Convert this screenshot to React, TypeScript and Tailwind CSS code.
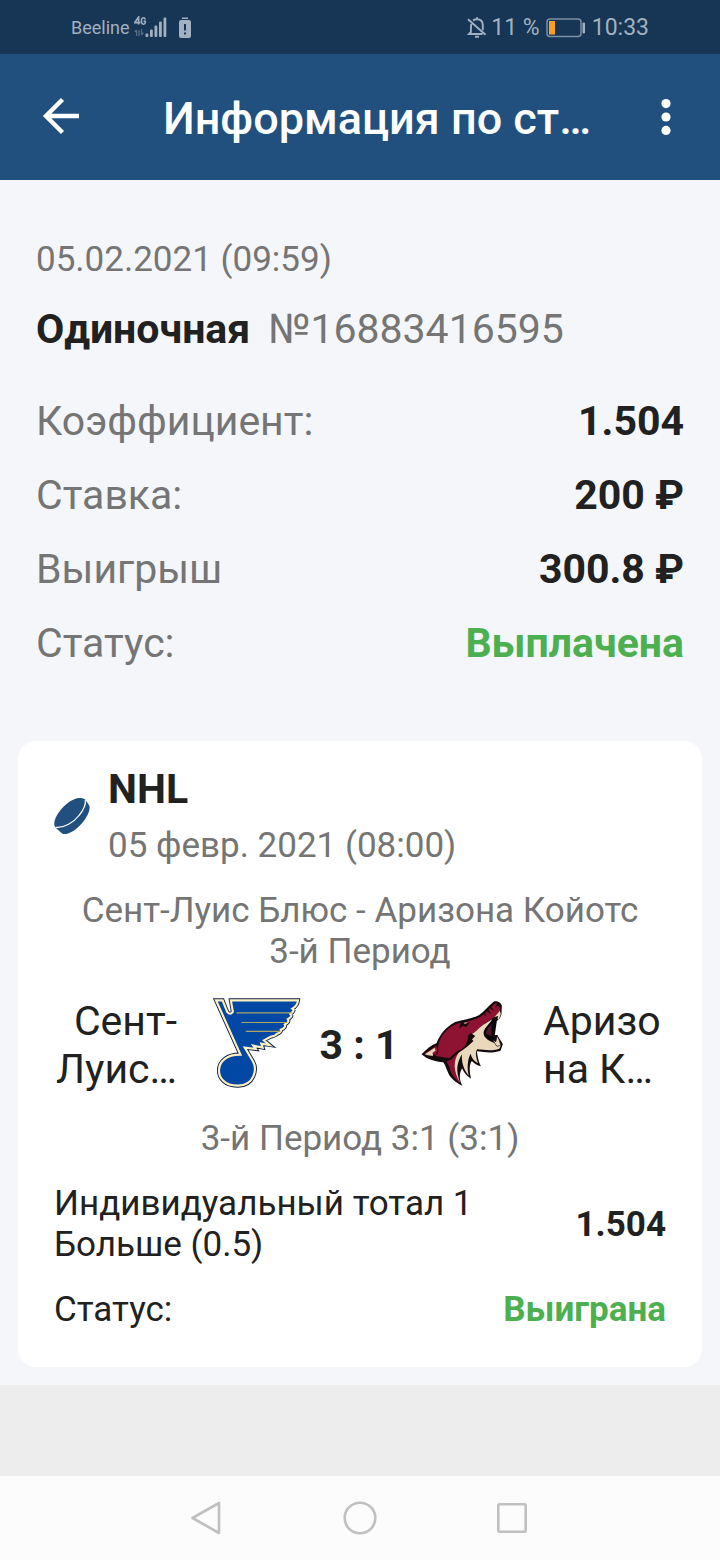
import React from "react";

function StatusBar() {
  return (
    <div className="flex h-[54px] items-center justify-between bg-[#173554] px-[71px] pt-0.5 text-[#a3b0bf]">
      <div className="flex items-center">
        <span className="text-[18px] leading-6">Beeline</span>
        <svg className="ml-1 h-6 w-[34px]" viewBox="0 0 34 24" fill="currentColor" aria-hidden="true">
          <path d="M4.600 8.500V1L.8 6.600h5.500M11.200 3.600C10.800 1.200 7.800 1.200 7.500 3.600v2.800c.3 2.400 3.500 2.400 3.800.1V5.300H9.600" fill="none" stroke="currentColor" strokeWidth="1.600" />
          <path d="M2.600 14v6M.8 16l1.800-2M5 14v6M7.500 13v6M7.500 19l2-2.400" fill="none" stroke="currentColor" strokeOpacity=".45" strokeWidth="1.300" />
          <rect x="11.500" y="17.500" width="2.800" height="3.500" rx="1" />
          <rect x="16" y="13.500" width="2.800" height="7.500" rx="1" />
          <rect x="20.500" y="9.500" width="2.800" height="11.500" rx="1" />
          <rect x="25" y="5.500" width="2.800" height="15.500" rx="1" />
          <rect x="29.500" y="1.500" width="2.800" height="19.500" rx="1" />
        </svg>
        <svg className="ml-2.5 h-6 w-[14px]" viewBox="0 0 14 24" aria-hidden="true">
          <path d="M4 1.500h6v1.600H4zM3 4h8a2 2 0 0 1 2 2v14a2 2 0 0 1-2 2H3a2 2 0 0 1-2-2V6a2 2 0 0 1 2-2z" fill="currentColor" />
          <path d="M7 8v6.500M7 16.500v2" stroke="#173554" strokeWidth="2" />
        </svg>
      </div>
      <div className="flex items-center text-[23px] leading-7">
        <svg className="h-6 w-5" viewBox="0 0 20 24" fill="none" stroke="currentColor" strokeWidth="1.900" aria-hidden="true">
          <path d="M6 4.500C7.200 3.600 8.500 3.300 10 3.300c3.800 0 5.800 2.500 5.800 6v5M4.300 8c-.4 1.500-.4 3-.4 8L2 18h13.500M1 3.300l17.500 15.500M8 20.800h4M10 3.300V1.200" />
        </svg>
        <span className="ml-1">11 %</span>
        <svg className="ml-1.5 h-5 w-10" viewBox="0 0 40 20" aria-hidden="true">
          <rect x="1" y="1" width="34" height="17.500" rx="3" fill="none" stroke="#7d8fa3" strokeWidth="1.500" />
          <rect x="3" y="3" width="6" height="13.500" fill="#ff9d1e" />
          <rect x="36.500" y="4.500" width="2.500" height="11" rx="1" fill="currentColor" />
        </svg>
        <span className="ml-1.5">10:33</span>
      </div>
    </div>
  );
}

function Toolbar() {
  return (
    <header className="flex h-[126px] items-center bg-[#21507f] pr-12 pl-[42px] text-white">
      <button type="button" aria-label="Назад" className="shrink-0">
        <svg className="h-10 w-[38px]" viewBox="0 0 38 40" fill="none" stroke="currentColor" strokeWidth="4.400" aria-hidden="true">
          <path d="M37 19H4M20.500 2.500L4 19L20.500 35.500" />
        </svg>
      </button>
      <h1 className="ml-[14px] min-w-0 flex-1 truncate pt-1 text-center text-[45px] leading-[56px] font-medium">
        Информация по ст…
      </h1>
      <button type="button" aria-label="Меню" className="flex w-3 shrink-0 justify-center">
        <svg className="h-9 w-[10px]" viewBox="0 0 10 36" fill="currentColor" aria-hidden="true">
          <circle cx="5" cy="4.600" r="4.600" />
          <circle cx="5" cy="18" r="4.600" />
          <circle cx="5" cy="31.400" r="4.600" />
        </svg>
      </button>
    </header>
  );
}

const summary = [
  { label: "Коэффициент:", value: "1.504", won: false },
  { label: "Ставка:", value: "200 ₽", won: false },
  { label: "Выигрыш", value: "300.8 ₽", won: false },
  { label: "Статус:", value: "Выплачена", won: true },
];

function Summary() {
  return (
    <section className="px-9 pt-[59px]">
      <p className="text-[35px] leading-[42px] text-[#757575]">05.02.2021 (09:59)</p>
      <h2 className="mt-6 flex gap-[18px] text-[41px] leading-[48px] text-[#757575]">
        <span className="font-bold text-[#212121]">Одиночная</span>
        <span className="font-normal">№16883416595</span>
      </h2>
      <dl className="mt-11 flex flex-col gap-[26px] text-[41px] leading-[48px]">
        {summary.map((row) => (
          <div key={row.label} className="flex justify-between">
            <dt className="text-[#757575]">{row.label}</dt>
            <dd className={row.won ? "font-bold text-[#4caf50]" : "font-bold text-[#212121]"}>{row.value}</dd>
          </div>
        ))}
      </dl>
    </section>
  );
}

function Puck() {
  return (
    <svg className="h-[38px] w-9 shrink-0" viewBox="0 0 36 38" aria-hidden="true">
      <path d="M.3 26C1 17 14 2 25 1c3.500-.3 6 .5 7 2.500l3.500 5.500C37 17 25 33 14 36.500c-3 1-5.500.5-6.500-.5L2 31C.5 29.500 0 28 .3 26z" fill="#21507f" />
      <path d="M1.500 30.300C10 31.500 20 25 25 18.500c4.500-5.500 7-11 6.300-15.500" fill="none" stroke="#fff" strokeWidth="1.200" />
    </svg>
  );
}

const bluesShape =
  "M7 5H27L41 40Q50 51 58 40L52 5H255Q253 22 238 30Q247 36 232 46Q240 54 224 62Q230 71 215 78Q220 87 203 94Q206 101 190 107Q188 112 172 115L152 126L169 140L144 136L148 148L120 142L127 152L94 148L119 190C132 213 123 262 74 263C32 264 16 238 16 217C16 188 42 168 81 169Z";

function BluesMark() {
  return (
    <svg className="mb-1 h-[90px] w-[88px]" viewBox="-1 -2 264 272" role="img" aria-label="Сент-Луис Блюс">
      <path d={bluesShape} fill="#0c214a" stroke="#0c214a" strokeWidth="12" />
      <path d={bluesShape} fill="#0148a4" stroke="#fff0bf" strokeWidth="6.500" />
      <path d="M69 43H236M84 72H222M97 99H202" stroke="#a8a565" strokeWidth="3.500" />
    </svg>
  );
}

function CoyotesMark() {
  return (
    <svg className="mb-1 size-[90px]" viewBox="27 35 265 270" role="img" aria-label="Аризона Койотс">
      <path d="M38 204C53 189 67 176 83 171C94 142 111 123 139 107C165 100 191 97 211 86C229 73 239 58 254 46C264 42 276 47 279 58L278 84L270 105L264 142L268 151L278 166L282 174L275 193C251 202 225 197 204 195C206 212 210 227 216 240C205 237 196 231 189 224C181 234 181 255 187 277C175 271 166 261 160 246C150 262 151 282 161 299C139 288 124 275 117 257C110 243 109 234 103 228C80 226 56 220 38 204Z" fill="#140b0d" />
      <path d="M46 203L82 178C86 187 86 198 80 209L122 216C135 201 147 194 158 188C171 181 176 166 178 148C190 145 201 135 212 124C228 111 243 100 257 92L276 69L268 58L258 62L266 51C252 50 240 73 219 89C202 100 181 103 162 110L150 124L157 109C128 113 103 137 92 164C84 184 92 190 85 205Z" fill="#8e1231" />
      <path d="M113 226L129 218C140 207 146 201 158 194C146 224 136 251 154 289C134 277 125 258 122 242Z" fill="#8e1231" />
      <path d="M178 148C190 145 201 135 212 124C226 112 239 107 250 99L239 116C223 129 221 143 229 153C238 164 251 169 260 170L267 175L277 176L271 187C247 196 227 190 205 189C198 198 202 217 208 231C195 225 188 213 185 202C176 219 174 247 180 268C163 251 158 224 159 204C145 228 139 254 154 289C133 255 133 222 149 200L175 181L194 164L183 153Z" fill="#ead8bd" />
      <path d="M48 204L78 184L80 193L71 199L73 208C63 209 55 207 48 204Z" fill="#ead8bd" />
      <path d="M242 111C228 125 224 139 230 149L246 162L253 167L250 143L264 115L267 91Z" fill="#080608" />
      <path d="M237 126L248 112L248 150L230 142Z" fill="#501528" />
      <path d="M257 92L273 73L276 83L270 100L266 98L268 89Z" fill="#ead8bd" />
      <path d="M264 104L278 92L276 120L266 146L258 146Z" fill="#fff" />
      <path d="M251 160L261 166L265 148L271 161L276 177L264 180Z" fill="#ead8bd" stroke="#140b0d" strokeWidth="2" />
      <path d="M152 126L158 108L180 100L170 114L184 108L172 122L163 118ZM242 65L257 75L248 62ZM232 73L248 84L238 69ZM222 80L233 91L228 78ZM176 149L186 140L199 149L188 161Z" fill="#140b0d" />
      <path d="M164 109L177 106L169 114Z" fill="#b09e8d" />
    </svg>
  );
}

function MatchCard() {
  return (
    <article className="mx-[18px] mt-[74px] mb-[18px] rounded-[18px] bg-white px-9 pt-6 pb-[37px] text-[35px] leading-[41px] text-[#212121]">
      <div className="flex items-center gap-[18px]">
        <Puck />
        <div>
          <h3 className="text-[41px] leading-[48px] font-bold">NHL</h3>
          <p className="mt-3 leading-[42px] text-[#757575]">05 февр. 2021 (08:00)</p>
        </div>
      </div>
      <p className="mt-[23px] text-center text-[#757575]">
        Сент-Луис Блюс - Аризона Койотс
        <br />
        3-й Период
      </p>
      <div className="mt-[25px] flex items-center text-[41px] leading-[48px]">
        <div className="flex-1 text-right">
          Сент-
          <br />
          Луис…
        </div>
        <div className="ml-9 flex items-center">
          <BluesMark />
          <strong className="w-[116px] text-center font-bold">3 : 1</strong>
          <CoyotesMark />
        </div>
        <div className="ml-9 flex-1">
          Аризо
          <br />
          на К…
        </div>
      </div>
      <p className="mt-[25px] text-center text-[#757575]">3-й Период 3:1 (3:1)</p>
      <div className="mt-6 flex items-center justify-between">
        <p>
          Индивидуальный тотал 1
          <br />
          Больше (0.5)
        </p>
        <strong className="font-bold">1.504</strong>
      </div>
      <div className="mt-6 flex items-center justify-between">
        <span>Статус:</span>
        <strong className="font-bold text-[#4caf50]">Выиграна</strong>
      </div>
    </article>
  );
}

function NavigationBar() {
  return (
    <nav className="flex h-[84px] items-center justify-center gap-[118px] bg-[#fcfcfc] text-[#c0c0c0]">
      <button type="button" aria-label="Назад">
        <svg className="size-[34px]" viewBox="0 0 34 34" fill="none" stroke="currentColor" strokeWidth="2.600" strokeLinejoin="round" aria-hidden="true">
          <path d="M28 2v30L1.500 17z" />
        </svg>
      </button>
      <button type="button" aria-label="Домой">
        <svg className="size-[34px]" viewBox="0 0 34 34" fill="none" stroke="currentColor" strokeWidth="2.600" aria-hidden="true">
          <circle cx="17" cy="17" r="15.300" />
        </svg>
      </button>
      <button type="button" aria-label="Недавние приложения">
        <svg className="size-[34px]" viewBox="0 0 34 34" fill="none" stroke="currentColor" strokeWidth="2.600" aria-hidden="true">
          <rect x="3.300" y="3.300" width="27.400" height="27.400" rx="1" />
        </svg>
      </button>
    </nav>
  );
}

export default function App() {
  return (
    <div className="flex min-h-screen flex-col bg-[#ededed] font-['Roboto',sans-serif]">
      <StatusBar />
      <Toolbar />
      <main className="flow-root bg-[#f4f6fa]">
        <Summary />
        <MatchCard />
      </main>
      <div className="grow" />
      <NavigationBar />
    </div>
  );
}
